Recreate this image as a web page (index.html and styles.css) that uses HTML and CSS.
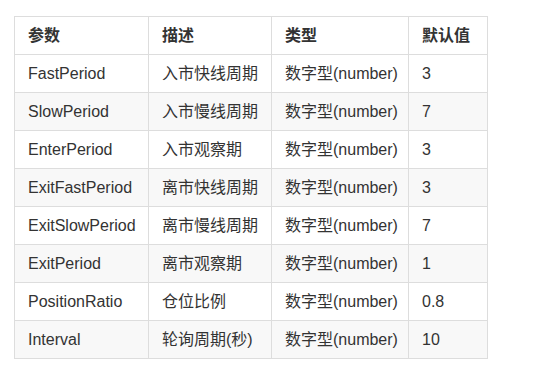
FILE: index.html
```html
<!DOCTYPE html>
<html>
<head>
<meta charset="utf-8">
<link rel="stylesheet" href="styles.css">
</head>
<body>
<table class="params">
  <colgroup>
    <col class="c1"><col class="c2"><col class="c3"><col class="c4">
  </colgroup>
  <thead>
    <tr><th>参数</th><th>描述</th><th>类型</th><th>默认值</th></tr>
  </thead>
  <tbody>
    <tr><td>FastPeriod</td><td>入市快线周期</td><td>数字型(number)</td><td>3</td></tr>
    <tr><td>SlowPeriod</td><td>入市慢线周期</td><td>数字型(number)</td><td>7</td></tr>
    <tr><td>EnterPeriod</td><td>入市观察期</td><td>数字型(number)</td><td>3</td></tr>
    <tr><td>ExitFastPeriod</td><td>离市快线周期</td><td>数字型(number)</td><td>3</td></tr>
    <tr><td>ExitSlowPeriod</td><td>离市慢线周期</td><td>数字型(number)</td><td>7</td></tr>
    <tr><td>ExitPeriod</td><td>离市观察期</td><td>数字型(number)</td><td>1</td></tr>
    <tr><td>PositionRatio</td><td>仓位比例</td><td>数字型(number)</td><td>0.8</td></tr>
    <tr><td>Interval</td><td>轮询周期(秒)</td><td>数字型(number)</td><td>10</td></tr>
  </tbody>
</table>
</body>
</html>
```

FILE: styles.css
```css
html, body {
  margin: 0;
  padding: 0;
  background: #fff;
}
body {
  padding: 16px 0 0 14px;
  font-family: "Liberation Sans", Arial, "Noto Sans CJK SC", sans-serif;
  font-size: 16px;
  color: #333;
}
.params {
  border-collapse: collapse;
  table-layout: fixed;
  width: 473px;
}
.c1 { width: 134px; }
.c2 { width: 123px; }
.c3 { width: 137px; }
.c4 { width: 79px; }
.params th,
.params td {
  border: 1px solid #ddd;
  height: 38px;
  padding: 0 13px;
  text-align: left;
  vertical-align: middle;
  white-space: nowrap;
  box-sizing: border-box;
  line-height: 20px;
}
.params th {
  font-weight: bold;
}
.params tbody tr:nth-child(2n) {
  background: #f8f8f8;
}
```
